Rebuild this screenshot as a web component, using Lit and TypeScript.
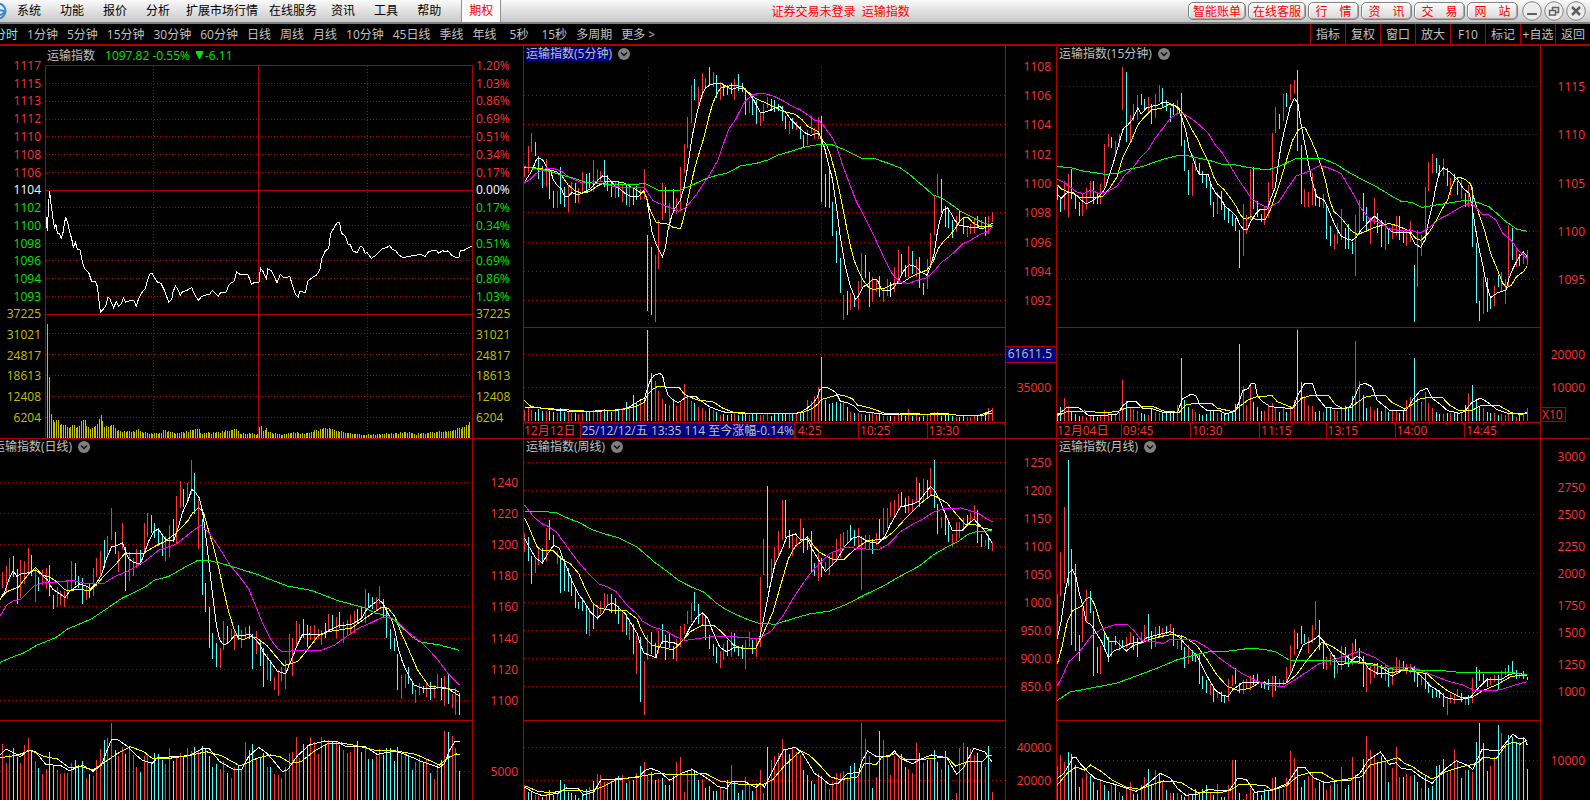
import { LitElement, html, svg, css, nothing } from "lit";
import { customElement, property } from "lit/decorators.js";
import { classMap } from "lit/directives/class-map.js";

/** Horizontal and vertical extent of a plot, in chart units. */
interface View { x: number; y: number; w: number; h: number; }
interface Tick { y: number; text: string; kind?: "mark" | "unit"; }
interface TimeCell { w: number; text: string; kind?: "mark" | "cut"; }
interface KlineData {
  name: string;
  active?: boolean;
  clipped?: boolean;
  view: View;
  from: number;
  to: number;
  split: number;
  base: number;
  rows: number[];
  cols?: number[];
  ticks: Tick[];
  times?: TimeCell[];
  bars: string;
  volumes: string;
  lines: { color: string; points: string }[];
}

const ticks = (text: string): Tick[] =>
  text.split(" ").map((t) => {
    const [label, y] = t.split("@");
    return { text: label, y: Number(y) };
  });

const MIN5: KlineData = {
  name: "运输指数(5分钟)",
  active: true,
  view: { x: 11.6, y: 18, w: 1397, h: 1128 },
  from: 13, to: 1372, split: 862, base: 1143,
  rows: [166, 253, 343, 430, 517, 607, 694, 781, 943, 1042],
  cols: [373, 875],
  ticks: [
    ...ticks("1108@79 1106@166 1104@253 1102@343 1100@430 1098@517 1096@607 1094@694 1092@781"),
    { text: "61611.5", y: 943, kind: "mark" },
    { text: "35000", y: 1042 },
  ],
  times: [
    { w: 169, text: "12月12日" },
    { w: 619, text: "25/12/12/五 13:35 114 至今涨幅-0.14%", kind: "mark" },
    { w: 180, text: "4:25", kind: "cut" },
    { w: 200, text: "10:25" },
    { w: 229, text: "13:30" },
  ],
  bars: "r378-412 r318-400 r279-336 c306-348 c348-417 c378-444 r357-441 c385-476 c452-504 r452-504 c380-492 c440-500 r435-516 r426-466 c428-489 r445-489 r396-462 c402-455 c398-445 r360-457 r387-428 r392-425 c360-441 c405-454 c423-471 r425-474 c425-471 r434-486 c434-495 r436-501 c440-495 c437-480 r448-480 r387-478 c585-812 c620-825 r645-846 r540-687 r430-540 c440-520 r490-566 c448-506 r474-522 r381-510 r312-400 r231-325 r135-249 c117-181 r141-200 r99-171 r114-142 c81-136 r96-141 c105-175 r127-180 c132-168 c135-165 c129-162 r117-180 c102-153 c129-156 c144-225 r183-219 c165-225 c180-252 r216-258 r192-243 r171-204 c177-212 c180-216 c192-213 c198-243 c228-267 r243-282 c234-267 r246-270 c258-297 c285-321 r270-315 r228-279 r264-297 r231-297 c228-486 c402-501 c385-503 c486-588 c573-669 c654-759 r765-840 c753-825 r759-810 c768-801 r723-810 r639-744 c645-714 c696-801 r711-786 r720-756 c708-771 r744-786 r717-768 w726-771 r681-756 r630-728 c642-702 c675-711 r618-711 c633-702 r657-711 c651-744 c729-765 r657-747 r579-684 r465-585 r402-465 c417-519 c498-561 c510-564 c540-594 r528-576 c513-549 c534-582 r558-591 r552-582 r534-579 c528-564 r540-567 c531-588 r528-582 r516-546",
  volumes: "1110 1105 1110 1117 1108 1113 1114 1113 1117 1119 1103 1115 1117 1119 1119 1122 1118 1117 1115 1110 1114 1113 1108 1112 1115 1113 1110 1105 1086 1100 1065 1085 1078 1070 870 998 1022 1053 1077 1092 1095 1077 1098 1087 1032 1070 1083 1089 1101 1105 1113 1105 1110 1116 1125 1122 1125 1122 1118 1125 1122 1120 1124 1122 1123 1124 1125 1122 1128 1122 1120 1122 1120 1122 1122 1120 1118 1115 1080 1083 1068 1041 951 1080 1091 1089 1086 1090 1083 1100 1116 1119 1120 1122 1125 1122 1120 1125 1122 1128 1128 1129 1127 1125 1122 1129 1107 1128 1125 1130 1128 1122 1125 1116 1116 1127 1126 1126 1128 1131 1130 1126 1131 1130 1128 1125 1125 1116 1104 1104",
  lines: [
    { color: "white", points: "13,428 20,415 30,400 40,378 48,358 56,354 66,360 76,378 88,390 97,420 108,436 120,446 130,471 140,470 150,458 170,464 185,456 205,446 225,422 240,408 252,409 265,425 278,440 290,447 305,460 320,468 345,468 360,452 368,475 375,520 383,575 395,612 414,650 422,625 430,570 440,530 450,505 465,482 477,440 487,380 500,290 515,215 530,160 540,143 553,134 570,129 585,130 600,140 615,148 630,143 650,146 665,160 680,182 698,219 715,215 735,207 755,198 765,212 775,222 790,242 810,262 830,280 845,286 857,282 866,280 872,290 885,325 897,375 908,420 919,500 930,590 945,680 960,740 975,778 985,765 995,742 1010,732 1025,718 1038,720 1050,750 1070,752 1085,744 1100,720 1115,692 1130,674 1150,680 1165,696 1182,706 1192,680 1203,640 1210,590 1218,545 1230,510 1242,504 1252,520 1262,540 1275,555 1295,560 1320,563 1345,565 1360,558 1372,549" },
    { color: "yellow", points: "13,383 45,384 75,388 88,390 105,395 120,405 140,435 160,452 180,460 200,455 225,438 250,425 280,424 305,430 330,445 350,458 361,456 368,475 378,510 395,546 410,550 425,551 445,562 466,566 475,535 485,490 497,430 510,375 520,340 535,290 550,225 560,190 570,165 582,145 600,139 625,136 645,140 665,158 685,176 710,187 735,200 760,213 800,223 820,240 835,258 852,268 866,275 875,296 890,315 900,340 915,395 925,440 935,490 950,570 960,620 970,660 982,690 995,718 1010,740 1025,748 1060,744 1085,732 1110,729 1130,714 1160,699 1182,690 1200,665 1215,625 1230,605 1245,590 1265,565 1275,545 1290,531 1303,534 1315,548 1335,560 1372,558" },
    { color: "magenta", points: "13,428 30,418 45,402 60,393 80,384 95,385 120,393 140,410 160,420 180,428 200,428 220,423 240,426 265,438 290,441 315,444 340,443 361,442 372,460 385,480 400,489 420,496 440,505 460,514 480,503 500,480 515,460 530,435 550,405 575,360 590,315 605,270 625,240 640,210 655,182 675,165 695,160 715,162 740,170 765,183 790,198 815,210 840,228 855,240 870,243 885,262 905,290 920,320 935,370 955,425 975,480 1000,530 1020,570 1040,615 1060,660 1080,700 1095,718 1110,728 1130,730 1150,722 1180,714 1200,696 1225,666 1245,652 1265,633 1285,612 1310,600 1335,584 1355,576 1372,561" },
    { color: "green", points: "13,380 45,386 88,394 120,405 160,416 190,427 240,432 300,432 345,432 365,431 378,438 400,450 430,450 465,450 490,440 515,428 545,414 575,405 600,400 640,378 690,369 720,360 750,345 790,333 830,320 870,313 905,314 940,328 990,354 1030,356 1070,370 1105,384 1130,402 1150,420 1175,442 1200,465 1225,474 1255,495 1280,514 1310,530 1340,546 1372,558" },
    { color: "white", points: "13,1101 60,1104 120,1112 180,1116 230,1112 280,1111 310,1105 330,1093 350,1080 362,1075 370,1045 380,1018 390,1006 405,1000 414,1006 420,1035 430,1065 445,1080 460,1088 475,1077 490,1068 510,1069 525,1082 550,1100 575,1110 600,1118 700,1121 800,1120 815,1117 835,1104 850,1090 862,1075 870,1050 880,1042 895,1044 910,1052 920,1062 930,1083 950,1088 970,1098 985,1113 1020,1118 1050,1122 1090,1124 1120,1120 1180,1123 1220,1119 1245,1122 1280,1127 1330,1128 1350,1120 1372,1112" },
    { color: "yellow", points: "13,1081 30,1098 45,1103 100,1107 200,1114 240,1113 300,1108 340,1098 360,1088 372,1062 385,1048 400,1039 430,1042 462,1042 475,1060 490,1070 520,1081 560,1085 590,1105 620,1117 700,1122 780,1121 820,1118 850,1105 865,1092 875,1078 895,1073 925,1064 945,1068 965,1076 980,1095 1020,1105 1060,1120 1100,1122 1250,1122 1270,1126 1345,1126 1355,1122 1372,1119" },
  ],
};

const MIN15: KlineData = {
  name: "运输指数(15分钟)",
  view: { x: 20.3, y: 18, w: 1403, h: 1128 },
  from: 21, to: 1386, split: 862, base: 1143,
  rows: [139, 283, 430, 574, 718, 943, 1042],
  ticks: [
    ...ticks("1115@139 1110@283 1105@430 1100@574 1095@718 20000@943 10000@1042"),
    { text: "X10", y: 1146, kind: "unit" },
  ],
  times: [
    { w: 190, text: "12月04日" },
    { w: 200, text: "09:45" },
    { w: 200, text: "10:30" },
    { w: 192, text: "11:15" },
    { w: 200, text: "13:15" },
    { w: 201, text: "14:00" },
    { w: 220, text: "14:45" },
  ],
  bars: "c441-480 c471-516 r423-510 r402-531 c387-477 c468-507 c486-528 r462-528 r444-507 r423-471 c423-492 c456-492 r432-492 r312-441 r282-321 c291-324 r303-345 r282-321 r81-210 c96-306 r225-306 r192-243 r165-240 c162-195 c177-210 r171-216 c192-252 r162-234 r135-186 c144-204 c180-213 c204-246 c189-225 r180-222 c159-318 c300-393 c390-465 r369-468 r357-393 c369-399 c393-429 c402-444 c432-495 c486-531 r456-522 c453-510 c495-540 c510-549 c522-558 c534-573 c570-684 r492-648 r525-582 r387-540 c381-507 c483-531 c522-546 r501-555 r426-534 r279-447 r201-279 c222-267 r162-243 c159-201 r132-180 r120-162 c90-333 c315-492 r447-501 r456-501 r399-495 c447-498 c471-501 r462-504 c495-597 c558-618 r582-627 r549-612 r507-600 c564-627 c552-627 c606-642 r525-708 r480-585 c459-543 c501-573 r531-612 r474-552 c519-579 c540-621 r540-630 c570-612 r555-597 r528-585 c528-600 c570-609 r573-618 r543-606 c675-846 r570-741 r585-648 r441-603 r366-453 r342-399 c354-399 c375-408 r357-408 c384-438 r414-465 c402-426 c423-465 r420-477 c459-501 r435-501 c441-621 c609-789 c783-843 r711-822 c714-816 c768-807 r738-798 c705-741 r696-756 r717-792 r555-738 c564-660 r627-681 c642-678 r636-672 r630-675",
  volumes: "1120 1102 1074 1098 1115 1122 1128 1128 1131 1128 1129 1131 1128 1110 1116 1122 1118 1117 1020 1083 1101 1108 1114 1119 1122 1125 1104 1115 1118 1117 1116 1119 1119 1095 954 1080 1101 1107 1116 1122 1125 1122 1110 1113 1118 1119 1122 1122 1116 1093 912 1038 1095 1029 1086 1100 1112 1113 1098 1090 1101 1116 1105 1116 1100 1080 870 1026 1068 1095 1098 1116 1113 1116 1101 1101 1110 1112 1104 1098 1105 1068 903 1023 1065 1104 1101 1110 1105 1113 1104 1117 1113 1110 1119 1113 1080 1071 954 1071 1086 1056 1089 1104 1116 1122 1122 1118 1120 1116 1118 1119 1095 1059 1035 1083 1098 1105 1116 1119 1118 1125 1122 1125 1122 1122 1131 1125 1119 1104",
  lines: [
    { color: "white", points: "21,462 33,475 45,462 55,456 68,458 85,475 105,492 120,484 140,470 152,458 162,440 172,405 182,375 192,340 203,300 213,265 225,256 240,238 255,204 265,222 280,204 300,198 315,195 328,186 345,189 365,198 375,210 385,240 395,275 405,330 415,352 425,385 435,405 460,404 468,435 480,458 495,474 508,498 525,513 540,528 552,555 562,568 573,568 583,545 597,522 610,508 632,507 642,475 655,440 662,380 672,310 685,255 697,203 710,175 720,190 727,240 738,300 750,365 760,420 775,470 795,480 805,498 817,530 828,555 845,588 860,596 878,601 890,591 905,568 920,552 942,528 965,548 980,565 995,576 1045,579 1060,612 1077,622 1090,598 1100,540 1110,500 1120,445 1130,400 1143,384 1160,395 1185,420 1200,445 1218,460 1226,500 1235,560 1245,620 1258,680 1268,735 1280,773 1300,758 1325,750 1333,715 1345,685 1360,655 1375,636 1386,650" },
    { color: "yellow", points: "21,435 35,448 65,460 85,471 105,474 130,472 152,470 170,450 195,410 212,350 235,305 255,255 270,236 295,210 325,204 345,193 370,200 390,225 410,265 430,300 445,335 460,365 475,410 487,432 505,448 525,475 540,498 550,520 562,535 572,538 583,529 598,538 625,538 640,510 655,465 670,420 690,350 705,300 720,272 733,261 742,265 758,300 775,340 790,385 802,430 812,480 825,515 845,533 860,552 875,572 893,584 915,575 940,563 985,550 1010,558 1045,573 1062,595 1077,601 1095,585 1110,563 1125,535 1140,505 1155,480 1165,445 1175,420 1188,411 1205,418 1222,432 1230,470 1245,520 1262,570 1280,640 1300,690 1315,730 1327,743 1340,736 1355,710 1375,695 1386,678" },
    { color: "magenta", points: "21,418 45,430 60,442 80,458 100,460 120,450 140,460 165,456 195,438 215,408 240,385 260,355 285,330 305,295 330,262 350,235 370,220 385,220 410,235 435,256 460,280 480,315 500,338 525,380 545,415 565,445 585,475 605,490 635,504 665,485 690,445 715,408 750,395 785,376 815,386 845,400 862,430 880,460 900,500 915,520 930,540 960,549 985,566 1010,571 1045,570 1065,577 1080,576 1105,560 1130,538 1160,522 1195,500 1222,488 1240,505 1255,522 1275,525 1295,540 1315,580 1340,602 1360,630 1386,656" },
    { color: "green", points: "21,379 65,384 95,393 130,398 160,403 195,400 220,390 270,379 330,357 370,347 400,347 430,354 460,360 500,373 540,375 580,383 630,390 665,380 695,365 715,356 790,355 830,372 860,392 900,415 945,438 1000,473 1020,484 1050,487 1080,502 1110,497 1160,489 1205,481 1235,485 1275,500 1300,522 1325,545 1355,567 1386,574" },
    { color: "white", points: "21,1125 50,1102 85,1104 110,1125 150,1127 195,1122 213,1095 228,1084 250,1085 270,1106 300,1107 330,1118 370,1117 385,1077 410,1062 425,1068 435,1095 455,1110 490,1110 510,1122 540,1112 560,1052 575,1046 585,1030 595,1030 602,1065 615,1083 640,1100 705,1106 720,1065 740,1030 762,1030 775,1070 800,1102 850,1107 872,1100 885,1070 900,1035 915,1030 935,1040 950,1080 985,1110 1035,1110 1055,1077 1075,1053 1095,1045 1110,1075 1130,1090 1155,1112 1190,1120 1205,1113 1225,1088 1250,1074 1270,1086 1300,1110 1335,1121 1370,1122 1386,1119" },
    { color: "yellow", points: "21,1128 50,1114 100,1113 150,1118 195,1115 225,1102 300,1100 330,1113 375,1117 395,1095 420,1090 470,1090 485,1104 530,1115 550,1100 575,1080 600,1070 645,1067 660,1085 685,1095 705,1104 730,1075 760,1066 810,1068 830,1095 850,1105 875,1103 895,1085 915,1072 940,1066 975,1066 990,1085 1030,1107 1050,1095 1070,1078 1095,1073 1140,1073 1160,1095 1185,1110 1225,1112 1250,1097 1305,1097 1340,1118 1370,1124 1386,1117" },
  ],
};

const DAILY: KlineData = {
  name: "运输指数(日线)",
  clipped: true,
  view: { x: 0, y: 12, w: 1396, h: 1083 },
  from: 8, to: 1359, split: 857, base: 1095,
  rows: [142, 235, 328, 421, 514, 610, 703, 796, 1009],
  ticks: ticks("1240@142 1220@235 1200@328 1180@421 1160@514 1140@610 1120@703 1100@796 5000@1009"),
  bars: "r411-459 r393-470 r369-440 c363-425 c402-507 r375-488 r378-447 r339-411 c360-423 r402-501 c426-468 r405-450 r399-462 c390-483 c480-522 r456-516 r468-510 r468-516 r438-492 r378-466 c384-450 c423-459 c429-507 r453-495 c447-489 r399-483 r369-426 r348-425 c315-400 r303-370 r219-315 c291-357 r348-411 r264-342 c336-468 r351-438 r369-423 r342-399 c345-390 r264-355 r234-306 c240-295 c264-309 c282-333 c300-363 r303-378 r270-366 c252-315 r183-325 r138-219 c162-216 r144-198 r75-177 c114-236 r192-342 c252-480 c444-531 c516-639 c594-672 c624-696 r639-699 r558-645 c573-624 r582-615 r582-645 c570-615 r585-639 r576-612 c573-612 c597-702 r588-657 c618-693 c639-756 r657-735 c675-738 r726-765 r705-783 r696-738 r675-762 r597-690 r609-723 r558-633 r567-620 c552-609 c570-636 r573-615 r570-624 r582-612 r585-630 c564-609 r537-585 c540-585 r546-609 c531-579 r561-624 r555-603 r540-600 r528-594 c522-567 c516-549 r462-564 c474-516 c486-522 r486-525 r453-507 c492-546 c516-609 c582-642 c609-648 c657-765 r720-792 r717-759 c696-747 c741-777 r765-804 r744-780 c753-774 r741-786 c741-795 r750-789 r717-762 c729-795 r723-813 c717-807 r777-819 r759-840 c774-840",
  volumes: "927 984 957 939 965 983 930 909 945 978 999 1018 1002 951 991 1005 1018 1014 1014 984 975 990 978 1029 1017 1023 975 942 915 909 865 945 963 935 957 933 960 996 1011 963 960 982 954 957 975 988 939 978 966 954 963 939 948 936 947 933 940 963 996 987 1002 978 1014 1029 996 990 1002 921 945 927 972 969 954 996 996 1018 1020 1029 996 954 951 906 970 927 930 906 921 957 906 930 915 921 918 930 945 954 951 936 918 951 936 972 972 963 942 960 939 939 978 936 954 954 963 1005 981 969 981 975 1014 1032 990 975 888 891 903 939 1009",
  lines: [
    { color: "white", points: "0,495 15,468 27,432 39,408 50,424 62,417 90,412 105,397 125,420 140,435 155,462 175,475 192,488 205,470 235,447 255,453 268,462 285,445 300,420 315,370 330,336 350,330 362,324 380,370 395,382 415,387 425,360 440,318 455,290 468,282 480,300 492,315 513,318 525,285 540,232 555,200 567,163 578,172 590,190 600,235 610,315 620,400 630,490 640,570 650,615 662,630 675,624 695,600 720,602 740,597 755,612 768,628 780,654 800,680 820,708 845,717 855,690 868,660 880,628 895,598 915,597 940,600 960,594 975,585 1000,573 1040,568 1070,550 1085,522 1100,510 1120,494 1132,504 1145,530 1160,560 1170,595 1178,640 1190,680 1205,715 1225,750 1255,762 1300,758 1325,762 1345,774 1359,783" },
    { color: "yellow", points: "0,492 20,470 55,456 90,410 105,405 125,420 150,428 170,442 190,463 205,468 230,462 265,468 285,450 310,420 345,385 370,354 425,354 460,333 490,318 520,295 555,258 568,236 587,217 602,232 615,280 630,330 645,390 660,460 675,525 692,582 705,610 720,614 740,605 760,609 790,632 815,663 840,692 880,680 905,650 940,603 970,590 1040,579 1080,550 1130,516 1150,522 1168,545 1185,590 1205,635 1235,705 1270,755 1310,757 1345,765 1359,772" },
    { color: "magenta", points: "0,543 20,510 40,497 60,494 100,453 125,444 170,441 215,436 260,447 310,444 340,424 380,408 430,378 470,345 520,328 570,288 595,270 615,290 640,325 680,390 705,420 735,460 755,510 775,560 800,612 820,640 835,650 900,645 950,646 990,630 1020,608 1060,580 1100,562 1130,547 1150,548 1175,560 1205,590 1250,625 1290,668 1325,715 1359,750" },
    { color: "green", points: "0,682 40,665 70,654 110,630 165,608 200,582 270,552 310,525 360,490 430,456 455,436 500,424 550,395 585,376 615,376 650,384 700,399 760,418 850,453 920,466 1000,497 1080,519 1110,534 1150,543 1180,568 1215,603 1240,620 1300,630 1359,646" },
    { color: "white", points: "0,960 18,942 40,953 60,965 85,945 105,950 135,988 180,992 205,1007 245,991 275,1009 300,990 315,950 330,914 350,915 375,933 400,958 420,975 450,985 465,969 500,966 560,962 600,940 620,942 650,980 690,1003 715,1003 735,965 765,937 790,955 815,985 835,1010 850,1005 880,962 915,930 960,918 1000,921 1025,936 1080,935 1115,958 1170,948 1210,963 1250,981 1300,998 1315,985 1330,945 1345,920 1359,921" },
    { color: "yellow", points: "0,968 50,961 90,946 130,964 170,972 205,999 240,994 275,1005 305,985 345,957 385,935 425,950 450,970 500,970 560,962 610,950 655,962 710,993 760,970 800,960 830,966 860,985 890,980 930,948 970,925 1010,924 1060,933 1110,946 1170,948 1230,958 1300,990 1325,968 1350,957 1359,960" },
  ],
};

const WEEKLY: KlineData = {
  name: "运输指数(周线)",
  view: { x: 11.6, y: 12, w: 1397, h: 1083 },
  from: 13, to: 1372, split: 857, base: 1095,
  rows: [82, 166, 250, 334, 418, 502, 586, 670, 754, 937, 1036],
  ticks: ticks("1250@82 1200@166 1150@250 1100@334 1050@418 1000@502 950.0@586 900.0@670 850.0@754 40000@937 20000@1036"),
  bars: "r294-351 c306-378 c363-447 r369-414 r342-390 c339-384 r279-378 c255-315 c300-335 r348-387 c363-474 c372-468 c399-471 c432-483 c456-519 c500-522 c489-528 c510-597 r519-603 c504-582 r510-555 r498-537 r474-520 r477-513 c477-534 c489-537 c513-567 r534-591 c537-600 r552-615 c567-657 r603-717 c606-801 r678-840 r600-675 c591-657 c624-669 r588-654 c567-627 c600-675 c597-639 c633-672 r612-678 r573-636 r567-597 r528-567 r504-561 c471-528 c507-567 r534-570 c546-615 c600-642 c627-663 c636-684 r648-699 r627-675 c615-663 r591-666 c594-651 c633-663 c630-672 r615-702 r591-635 c615-657 r612-666 r426-636 r312-420 c153-459 r372-441 r336-396 r288-363 r195-315 c195-309 c285-339 r303-363 r306-336 r252-312 c279-354 c306-345 c288-411 c384-423 r354-438 c369-426 r381-405 r363-420 r351-393 r312-381 r297-369 r291-336 r285-327 c270-312 c285-333 r279-342 r303-465 r300-342 r300-345 c312-357 r294-330 c252-315 r219-300 r219-279 r201-246 r195-249 r177-228 c171-212 c189-234 r183-234 r192-228 r126-204 c144-216 r132-195 c135-189 r99-180 c75-219 c207-297 r246-279 c240-300 c255-321 r297-336 r261-318 r261-309 r249-288 c240-273 r234-264 r210-255 c225-324 c297-336 r315-333 c300-342 r321-348",
  volumes: "1050 1070 1071 1080 1083 1086 1078 1065 1080 1075 1035 1047 1072 1074 1080 1090 1078 1062 1056 1038 1017 1020 1040 1041 1038 1029 1023 1020 1044 1038 1035 1014 993 981 1020 1011 1035 1032 1029 1050 1050 1023 981 966 1071 1005 999 1006 1035 1032 1059 1053 1068 1068 1056 1065 1035 990 1041 1074 1065 1026 1047 1068 1044 1005 1074 936 975 963 954 912 945 957 939 951 960 1005 1020 1038 1047 1014 1023 1041 1062 1041 1014 1014 1008 1026 993 984 1010 865 912 963 1059 1026 888 915 966 1020 963 969 957 996 1002 1014 924 954 984 975 975 945 981 1002 948 990 1092 1074 940 924 936 942 960 954 978 996 933 1071",
  lines: [
    { color: "white", points: "13,310 25,333 45,368 65,384 80,357 97,331 115,340 125,372 140,408 155,447 170,478 185,498 205,532 225,549 240,535 255,510 270,504 285,516 305,536 325,570 341,597 350,630 360,654 395,668 402,640 414,620 445,622 460,630 478,610 495,575 515,545 530,534 545,549 560,590 580,636 600,650 625,636 650,640 685,640 695,615 710,540 725,460 740,390 760,345 775,306 800,297 815,315 835,312 850,345 865,370 887,410 900,397 920,375 945,332 965,310 985,304 1010,320 1040,325 1060,304 1075,270 1105,216 1140,207 1160,198 1172,180 1192,155 1205,168 1220,198 1235,235 1255,285 1285,285 1300,270 1318,252 1330,265 1350,288 1372,325" },
    { color: "yellow", points: "13,250 25,273 35,300 50,336 65,348 95,346 120,372 145,385 170,415 185,450 210,503 230,519 265,526 310,528 340,552 350,580 365,610 385,632 410,636 445,645 465,625 495,590 530,570 565,573 585,590 620,630 650,642 685,640 700,610 735,530 760,440 780,370 800,333 835,306 855,335 870,352 905,372 940,374 970,345 1010,316 1055,314 1085,290 1120,250 1165,204 1195,180 1210,186 1240,204 1265,235 1295,270 1320,268 1345,279 1372,285" },
    { color: "magenta", points: "13,210 40,246 65,267 80,273 105,290 135,333 165,375 200,417 230,447 255,456 280,471 310,510 340,537 355,558 385,576 420,586 450,604 480,616 530,609 570,603 650,607 690,612 730,588 765,540 790,495 835,426 865,390 900,355 945,337 1005,342 1045,342 1070,328 1105,290 1140,268 1170,252 1200,232 1230,221 1280,219 1330,234 1350,248 1372,261" },
    { color: "green", points: "13,228 65,229 105,233 140,250 170,262 210,284 250,298 285,308 340,336 390,381 430,411 460,436 500,457 535,472 570,504 600,525 650,549 690,564 740,568 790,552 840,537 900,528 950,507 1000,480 1050,456 1100,426 1160,393 1200,360 1240,336 1275,318 1300,298 1325,290 1372,287" },
    { color: "white", points: "13,1056 40,1073 65,1082 110,1075 135,1059 170,1062 185,1080 215,1070 235,1035 280,1032 345,1026 365,1005 380,1000 405,1010 435,1036 450,1026 470,1014 500,1004 525,1018 555,1038 575,1055 600,1060 615,1040 650,1038 685,1058 698,1045 710,1056 725,1025 745,985 765,945 800,937 820,955 835,980 855,1015 875,1028 900,1050 925,1044 950,1017 985,1011 992,980 1010,948 1035,965 1070,966 1088,948 1105,970 1140,986 1165,972 1195,960 1240,968 1268,1018 1290,995 1318,940 1350,951 1372,982" },
    { color: "yellow", points: "13,1052 50,1068 90,1074 130,1065 200,1069 240,1055 280,1035 360,1022 400,1015 450,1020 540,1016 580,1038 640,1048 710,1047 735,1033 770,990 815,948 840,960 870,990 900,1025 930,1034 980,1026 1000,985 1035,988 1050,967 1090,956 1120,974 1180,972 1240,966 1265,993 1300,980 1345,978 1358,963 1372,961" },
  ],
};

const MONTHLY: KlineData = {
  name: "运输指数(月线)",
  view: { x: 20.3, y: 12, w: 1403, h: 1083 },
  from: 21, to: 1386, split: 857, base: 1095,
  rows: [238, 415, 592, 769, 976],
  ticks: ticks("3000@62 2750@155 2500@238 2250@332 2000@415 1750@509 1500@592 1250@686 1000@769 10000@976"),
  bars: "r477-612 r351-483 r216-444 c75-453 c342-630 c387-648 c600-678 r520-621 r465-565 c468-534 c528-723 c635-714 r633-717 c588-642 c606-681 r621-666 c603-630 r615-648 c615-639 r606-639 r591-624 c603-645 c609-666 r591-627 r570-618 c537-618 c588-642 r576-636 c573-609 r579-609 c573-597 r567-600 c579-633 r618-642 c600-645 c636-699 r630-687 c645-678 c654-681 c660-747 c723-762 c735-774 r747-780 c756-801 r768-789 c771-801 c783-804 r732-798 r720-753 c699-747 c744-774 r735-777 r732-762 r723-765 c720-750 c717-744 c741-759 c738-762 c732-765 r723-786 c723-768 r732-756 r735-750 r696-744 r630-714 r582-660 c594-642 c573-627 c597-624 r606-654 r570-624 r498-585 c555-645 c618-702 r666-705 r654-690 c660-729 r690-714 r633-705 c636-684 c660-696 r624-690 c612-648 c639-684 c663-756 r684-771 r693-747 r684-729 c684-720 c690-729 r690-738 c702-756 r702-750 r666-714 r675-711 c678-708 r687-717 r687-714 c693-741 c711-756 r720-750 c717-762 c741-774 c762-789 c762-786 c765-789 c774-816 r789-840 r777-804 r780-807 r762-786 c774-801 r789-810 c780-810 r729-804 c696-759 c705-738 c717-741 c729-756 r726-750 r720-741 c720-762 r708-738 r699-720 c690-714 c678-714 c705-732 r714-729 c708-732 c726-735",
  volumes: "993 960 981 951 957 990 1056 1029 1014 1023 1041 1065 1033 1050 1068 1050 1050 1071 1083 1062 1041 1077 1077 1050 1026 1002 1047 1005 1020 1041 1065 1074 1075 1074 1080 1085 1074 1080 1062 1077 1062 1050 1071 1080 1047 1086 1086 1050 975 976 1074 1092 1077 1060 1074 1068 1080 1062 1065 1029 1026 1059 1062 1029 948 969 1002 1056 1035 1023 1014 1059 1041 1041 1065 1050 1035 1047 996 1062 1050 966 1020 1038 972 903 945 966 981 963 981 1041 999 936 1026 1026 1017 1023 1020 1041 1059 1023 1059 1053 993 990 972 1014 1005 942 981 1029 1005 1005 1011 921 865 924 1008 993 966 870 894 930 900 906 921 921 906 1002",
  lines: [
    { color: "white", points: "21,612 33,555 45,465 55,415 65,404 75,425 85,475 95,510 105,560 120,570 135,595 150,620 170,668 185,648 205,640 235,625 265,622 280,609 310,600 350,590 375,606 395,630 425,660 440,690 460,730 480,765 500,780 517,785 530,765 560,742 610,743 650,747 685,744 700,715 715,675 735,630 760,618 780,603 795,618 815,650 840,690 870,684 890,664 905,670 925,700 950,715 975,714 995,723 1020,708 1045,696 1065,712 1085,730 1105,753 1125,765 1150,788 1185,795 1220,788 1245,758 1270,733 1310,734 1335,718 1360,714 1386,721" },
    { color: "yellow", points: "21,688 35,635 50,560 65,528 90,515 105,492 118,486 130,510 145,560 170,618 192,619 222,648 240,633 280,618 315,606 355,598 390,606 425,630 455,672 485,720 515,754 545,766 580,760 610,742 650,747 685,745 715,720 745,678 790,621 820,635 850,655 880,678 910,683 945,688 990,714 1025,705 1095,716 1120,740 1155,768 1195,788 1225,788 1255,768 1300,748 1340,724 1386,720" },
    { color: "magenta", points: "21,753 40,715 55,680 85,651 120,603 150,582 190,569 225,568 245,588 265,615 330,625 350,613 400,613 425,618 460,640 485,663 520,690 560,717 600,738 640,752 680,754 710,735 750,708 780,687 830,672 880,655 900,649 945,668 985,696 1050,697 1085,709 1110,720 1160,740 1200,750 1230,765 1270,768 1310,764 1345,752 1386,740" },
    { color: "green", points: "21,796 60,770 95,764 145,754 195,744 250,723 310,700 370,674 420,660 460,651 520,648 580,640 620,643 655,650 695,675 820,678 895,684 945,692 1000,703 1060,706 1150,708 1190,712 1300,712 1350,714 1386,720" },
    { color: "white", points: "21,1031 40,1015 55,990 65,969 75,967 90,988 110,1010 130,1030 160,1040 195,1050 250,1069 280,1050 320,1015 350,1030 370,1060 395,1081 430,1077 460,1064 520,1068 545,1030 570,1033 595,1072 645,1065 690,1045 720,998 740,997 765,1028 800,1043 840,1037 870,1038 900,1015 925,975 960,951 985,988 1005,983 1020,1000 1050,1004 1080,1028 1110,1045 1150,1000 1180,977 1210,990 1228,1003 1255,943 1305,948 1345,897 1360,910 1380,912 1386,930" },
    { color: "yellow", points: "21,1050 50,1015 75,996 100,1005 118,990 150,1010 180,1035 220,1056 260,1063 300,1048 330,1038 380,1042 430,1074 500,1072 525,1065 550,1048 625,1051 645,1066 690,1050 720,1023 750,1014 790,1013 830,1038 905,1025 930,990 985,976 1010,968 1030,985 1055,996 1080,1015 1110,1032 1150,1010 1190,997 1240,985 1260,966 1295,972 1325,930 1345,921 1365,928 1386,916" },
  ],
};

const INTRADAY = {
  price: "135,522 140,573 144,485 147,454 150,487 154,515 157,540 161,564 165,553 170,580 176,582 181,596 187,575 191,545 195,533 200,548 206,575 212,597 217,622 223,608 229,627 236,627 243,663 250,686 262,697 271,724 283,725 288,740 292,775 297,817 305,808 313,797 319,772 325,775 330,790 336,803 344,785 351,799 360,790 365,773 371,787 383,782 397,783 403,799 410,775 420,757 430,745 436,722 443,702 450,700 456,712 466,727 476,730 486,750 499,787 508,778 512,755 519,738 526,748 533,766 540,755 553,751 567,743 576,765 587,780 596,770 610,765 620,763 628,751 645,769 653,757 668,757 678,733 692,724 700,696 712,705 733,704 744,732 754,727 766,728 770,684 778,695 788,717 792,687 803,693 812,710 819,729 829,704 840,713 857,710 865,735 874,763 882,771 887,754 903,758 911,723 925,712 936,705 946,690 952,655 962,633 972,625 978,580 990,560 997,548 1004,547 1010,580 1020,586 1030,613 1035,612 1044,633 1056,638 1066,619 1073,622 1080,640 1086,638 1098,655 1110,647 1120,638 1130,626 1145,622 1152,616 1160,627 1170,632 1180,645 1193,653 1205,650 1245,643 1257,650 1268,634 1290,630 1297,639 1310,632 1318,636 1325,632 1335,645 1350,653 1357,653 1362,630 1374,630 1382,625 1395,619",
  volume: "141,852 147,1032 150,1116 155,1138 165,1150 170,1131 176,1152 190,1155 208,1165 217,1152 225,1163 236,1158 241,1143 245,1145 250,1131 255,1155 270,1168 285,1155 291,1150 297,1122 303,1137 309,1160 325,1160 336,1152 345,1172 380,1174 403,1175 410,1167 420,1176 450,1180 480,1179 487,1167 495,1174 520,1180 550,1176 587,1164 595,1180 640,1178 702,1167 710,1182 750,1180 766,1184 770,1140 776,1174 788,1164 795,1176 830,1184 870,1176 900,1182 951,1167 975,1164 990,1170 1020,1178 1080,1185 1130,1182 1170,1180 1200,1176 1230,1182 1290,1176 1330,1174 1360,1165 1385,1155 1394,1133",
  prices: ["1117", "1115", "1113", "1112", "1110", "1108", "1106", "1104", "1102", "1100", "1098", "1096", "1094", "1093"],
  rates: ["1.20%", "1.03%", "0.86%", "0.69%", "0.51%", "0.34%", "0.17%", "0.00%", "0.17%", "0.34%", "0.51%", "0.69%", "0.86%", "1.03%"],
  lots: ["37225", "31021", "24817", "18613", "12408", "6204"],
};

const line = (cls: string, x1: number, y1: number, x2: number, y2: number) =>
  svg`<line class=${cls} x1=${x1} y1=${y1} x2=${x2} y2=${y2}></line>`;

/** Rules shared by every plot. */
const plotStyles = css`
  svg.plot {
    display: block;
    width: 100%;
    height: 100%;
    min-height: 0;
    shape-rendering: crispEdges;
    fill: none;
    stroke-width: 1px;
  }
  svg.plot * { vector-effect: non-scaling-stroke; }
  .solid { stroke: #b00000; }
  .dotted { stroke: #b00000; stroke-dasharray: 1 3; }
  .dense { stroke: #b00000; stroke-dasharray: 1 2; }
  .r { stroke: #ff3232; }
  .c { stroke: #54fcfc; }
  .w, .white { stroke: #fff; }
  .yellow { stroke: #ff0; }
  .magenta { stroke: #f0f; }
  .green { stroke: #0f0; }
  .olive { stroke: #c0c000; }
`;

@customElement("kline-pane")
class KlinePane extends LitElement {
  @property({ attribute: false }) data!: KlineData;

  static styles = [
    plotStyles,
    css`
      :host {
        display: grid;
        grid-template-columns: minmax(0, 1fr) var(--axis-width, 51px);
        grid-template-rows: minmax(0, 1fr) auto;
        min-width: 0;
        min-height: 0;
        overflow: hidden;
        color: #ff3232;
      }
      .stage { display: grid; min-height: 0; min-width: 0; }
      .stage > * { grid-area: 1 / 1; }
      .head {
        display: flex;
        align-items: center;
        align-self: start;
        gap: 6px;
        padding: 1px 2px;
      }
      .clipped { margin-left: -9px; }
      h2 {
        margin: 0;
        font: inherit;
        line-height: 14px;
        color: #c0c0c0;
        white-space: nowrap;
      }
      .active { background: #000080; }
      button { padding: 0; border: 0; background: none; line-height: 0; cursor: pointer; }
      .axis {
        grid-row: 1 / 3;
        grid-column: 2;
        display: flex;
        flex-direction: column;
        border-left: 1px solid #b00000;
        text-align: right;
      }
      .timed { padding-bottom: 16px; }
      .gap { flex: 1 1 0; min-height: 0; }
      .tick { height: 0; line-height: 2px; padding-right: 5px; }
      .mark {
        height: 15px;
        line-height: 14px;
        margin: -8px 0 -9px;
        padding-right: 4px;
        border: solid #b00000;
        border-width: 1px 0;
        background: #000080;
        color: #c0c0c0;
      }
      .unit {
        align-self: flex-start;
        height: 13px;
        line-height: 13px;
        margin-top: -15px;
        padding: 0 2px 0 1px;
        border: solid #b00000;
        border-width: 1px 1px 1px 0;
      }
      .times {
        display: flex;
        height: 15px;
        border-top: 1px solid #b00000;
        line-height: 15px;
        white-space: nowrap;
      }
      .cell {
        flex: 1 1 0;
        min-width: 0;
        box-sizing: border-box;
        padding-left: 1px;
        border-left: 1px solid #b00000;
        background: repeating-linear-gradient(to right, transparent 0 calc(25% - 1px), #b00000 calc(25% - 1px) 25%) 0 0 / 100% 2px no-repeat;
      }
      .cell:first-child { padding-left: 0; border-left: 0; background: none; }
      .now { flex: none; padding-left: 0; background: #000080; color: #c0c0c0; }
      .cut { padding-left: 3px; }
    `,
  ];

  render() {
    const d = this.data;
    const bars = d.bars.split(" ");
    const volumes = d.volumes.split(" ").map(Number);
    const at = (i: number, n: number) => d.from + ((d.to - d.from) * i) / (n - 1);
    const v = d.view;
    let last = v.y;
    return html`
      <div class="stage">
        <svg class="plot" viewBox="${v.x} ${v.y} ${v.w} ${v.h}" preserveAspectRatio="none" aria-hidden="true">
          ${d.rows.map((y) => line("dotted", v.x, y, v.x + v.w, y))}
          ${(d.cols ?? []).map((x) => line("dotted", x, 81, x, d.base))}
          ${line("solid", v.x, d.split, v.x + v.w, d.split)}
          ${bars.map((b, i) => {
            const [hi, lo] = b.slice(1).split("-").map(Number);
            const x = at(i, bars.length);
            return line(b[0], x, hi, x, lo);
          })}
          ${volumes.map((top, i) => {
            const x = at(i, volumes.length);
            return line((bars[i] ?? "r")[0], x, top, x, d.base);
          })}
          ${d.lines.map((l) => svg`<polyline class=${l.color} points=${l.points}></polyline>`)}
        </svg>
        <div class=${classMap({ head: true, clipped: !!d.clipped })}>
          <h2 class=${classMap({ active: !!d.active })}>${d.name}</h2>
          <button aria-label="切换指标">
            <svg width="12" height="12" viewBox="0 0 12 12">
              <circle cx="6" cy="6" r="6" fill="#808080"></circle>
              <path d="M3 4.5 6 7.5 9 4.5" fill="none" stroke="#111" stroke-width="1.4"></path>
            </svg>
          </button>
        </div>
      </div>
      <div class=${classMap({ axis: true, timed: !!d.times })}>
        ${d.ticks.map((t) => {
          const grow = t.y - last;
          last = t.y;
          return html`<span class="gap" style="flex-grow:${grow}"></span>
            <span class=${t.kind ?? "tick"}>${t.text}</span>`;
        })}
        <span class="gap" style="flex-grow:${Math.max(v.y + v.h - last, 0)}"></span>
      </div>
      ${d.times
        ? html`<div class="times">
            ${d.times.map((t) =>
              t.kind === "mark"
                ? html`<span class="cell now">${t.text}</span>`
                : html`<span
                    class=${classMap({ cell: true, cut: t.kind === "cut" })}
                    style="flex-grow:${t.w}"
                  >${t.text}</span>`,
            )}
          </div>`
        : nothing}
    `;
  }
}

@customElement("intraday-pane")
class IntradayPane extends LitElement {
  static styles = [
    plotStyles,
    css`
      :host {
        display: grid;
        grid-template-columns: 45px minmax(0, 1fr) 50px;
        grid-template-rows: 19px minmax(0, 1fr);
        min-width: 0;
        min-height: 0;
      }
      .head {
        grid-column: 2 / 4;
        display: flex;
        align-items: center;
        padding-left: 2px;
        line-height: 18px;
        color: #00e600;
        white-space: pre;
      }
      h2 { margin: 0 10px 0 0; font: inherit; color: #c0c0c0; }
      .drop { margin: 0 1px 0 5px; }
      .frame {
        min-height: 0;
        border: solid #b00000;
        border-width: 1px 1px 0;
      }
      /* Each label row is centred on the grid line above it. */
      .scale {
        display: grid;
        grid-template-rows: 249fr 124fr;
        min-height: 0;
        margin: -8px 0 8px;
      }
      .left { padding-right: 4px; text-align: right; }
      .right { padding-left: 3px; }
      .part { display: flex; flex-direction: column; min-height: 0; }
      .lots { margin: -2px 0 2px; }
      .label {
        display: grid;
        align-items: center;
        flex: 1 1 0;
        min-height: 0;
        line-height: 14px;
      }
      .up { color: #ff3232; }
      .flat { color: #fff; }
      .down { color: #00e600; }
      .lot { color: #c0c000; }
    `,
  ];

  private scale(side: string, values: string[]) {
    const tone = (i: number) => (i < 7 ? "up" : i === 7 ? "flat" : "down");
    return html`<div class="scale ${side}">
      <div class="part">${values.map((v, i) => html`<span class="label ${tone(i)}">${v}</span>`)}</div>
      <div class="part lots">${INTRADAY.lots.map((v) => html`<span class="label lot">${v}</span>`)}</div>
    </div>`;
  }

  render() {
    const marks = INTRADAY.volume.split(" ").map((p) => p.split(",").map(Number));
    const bars = [];
    for (let x = 141, i = 0; x < 1395; x += 5.27, i++) {
      const k = Math.max(1, marks.findIndex((m) => m[0] >= x));
      const [x0, y0] = marks[k - 1];
      const [x1, y1] = marks[k];
      const y = y0 + ((y1 - y0) * (x - x0)) / (x1 - x0);
      bars.push(line("olive", x, x > 160 ? y + ((i * 7) % 5) - 2 : y, x, 1194));
    }
    return html`
      <div class="head"><h2>运输指数</h2><span>1097.82 -0.55%</span><svg class="drop" width="9" height="9" viewBox="0 0 9 9" aria-hidden="true"><path d="M1 0H8V2L5 8H4L1 2z" fill="#00e600"></path></svg><span>-6.11</span></div>
      ${this.scale("left", INTRADAY.prices)}
      <div class="frame">
        <svg class="plot" viewBox="136 78 1260 1116" preserveAspectRatio="none" aria-hidden="true">
          ${[130, 184, 238, 290, 344, 397, 502, 556, 610, 661, 715, 769, 880, 943, 1006, 1069, 1132].map((y) => line("dense", 136, y, 1396, y))}
          ${[454, 1087].map((x) => line("dense", x, 78, x, 1194))}
          ${[451, 823].map((y) => line("solid", 136, y, 1396, y))}
          ${line("solid", 765, 78, 765, 1194)}
          ${bars}
          <polyline class="white" points=${INTRADAY.price}></polyline>
        </svg>
      </div>
      ${this.scale("right", INTRADAY.rates)}
    `;
  }
}

@customElement("app-root")
class AppRoot extends LitElement {
  static styles = css`
    :host {
      display: grid;
      grid-template-rows: auto auto minmax(0, 1fr);
      height: 100vh;
      overflow: hidden;
      background: #000;
      font: 12px "Open Sans", "Noto Sans CJK SC", sans-serif;
    }
    button {
      margin: 0;
      padding: 0;
      border: 0;
      background: none;
      color: inherit;
      font: inherit;
      white-space: nowrap;
      cursor: pointer;
    }
    .menubar {
      display: flex;
      align-items: center;
      height: 22px;
      border-bottom: 2px solid #808080;
      background: linear-gradient(#fafafa, #c8c8c8);
      color: #000;
    }
    .logo { width: 8px; height: 18px; }
    .menu { padding: 0 10px 0 9px; line-height: 22px; }
    .wide { padding: 0 5px 0 6px; }
    .tab {
      margin-left: 10px;
      padding: 0 7px;
      border: solid #909090;
      border-width: 0 1px;
      background: #fafafa;
      color: #f00;
      line-height: 22px;
    }
    .status { flex: 1; padding-right: 8px; text-align: center; color: #f00; }
    .tools { display: flex; gap: 2px; }
    .tool {
      box-sizing: border-box;
      height: 18px;
      min-width: 51px;
      padding: 0 4px;
      border: 1px solid #808080;
      border-radius: 5px;
      background: linear-gradient(#fafafa, #d8d8d8);
      box-shadow: inset -1px -1px 0 #a8a8a8, inset 1px 1px 0 #fff;
      color: #f00;
      line-height: 15px;
      white-space: pre;
    }
    .windows { display: flex; gap: 2px; margin: 0 4px; }
    .windows button { line-height: 0; }
    .periods {
      display: flex;
      justify-content: space-between;
      height: 20px;
      border-bottom: 2px solid #b00000;
      color: #c0c0c0;
    }
    .list { display: flex; gap: 9px; margin-left: -6px; }
    .seconds { margin-left: 4px; }
    .current { color: #54fcfc; }
    .actions { display: flex; }
    .actions button {
      box-sizing: border-box;
      width: 35px;
      border-left: 1px solid #b00000;
    }
    .board {
      display: grid;
      grid-template-columns: 523fr 533fr 534fr;
      grid-template-rows: 392fr 362fr;
      min-height: 0;
    }
    .side { border-left: 1px solid #b00000; }
    .low { border-top: 1px solid #b00000; }
    .slim { --axis-width: 50px; }
  `;

  render() {
    const menus = ["系统", "功能", "报价", "分析", "扩展市场行情", "在线服务", "资讯", "工具", "帮助"];
    const tools = ["智能账单", "在线客服", "行　情", "资　讯", "交　易", "网　站"];
    const periods = ["分时", "1分钟", "5分钟", "15分钟", "30分钟", "60分钟", "日线", "周线", "月线", "10分钟", "45日线", "季线", "年线", "5秒", "15秒", "多周期", "更多 >"];
    const actions = ["指标", "复权", "窗口", "放大", "F10", "标记", "+自选", "返回"];
    return html`
      <header class="menubar">
        <svg class="logo" viewBox="0 0 8 18" aria-hidden="true">
          <circle cx="-2" cy="9" r="7.5" fill="#d8ecfa" stroke="#3a86cc" stroke-width="2"></circle>
          <path d="M-8 10C-4 7.500 2 7.500 6 10M0 13Q3 12.500 4 10.500" fill="none" stroke="#3a86cc" stroke-width="2"></path>
        </svg>
        ${menus.map((m) => html`<button class=${classMap({ menu: true, wide: m.length > 2 })}>${m}</button>`)}
        <button class="tab">期权</button>
        <span class="status">证券交易未登录&nbsp; 运输指数</span>
        <div class="tools">${tools.map((t) => html`<button class="tool">${t}</button>`)}</div>
        <div class="windows">
          ${[
            ["最小化", svg`<path d="M5 13H15" stroke-width="2"></path>`],
            ["还原", svg`<path d="M8.500 9V6.500H14.500V11.500H12M5.500 9.500H11.500V14H5.500z" stroke-width="1.500"></path>`],
            ["关闭", svg`<path d="M6 6 14 14M14 6 6 14" stroke-width="2.500"></path>`],
          ].map(
            ([label, icon]) => html`<button aria-label=${label as string}>
              <svg width="20" height="20" viewBox="0 0 20 20" fill="none" stroke="#606060">
                <circle cx="10" cy="10" r="9.300" fill="#ececec" stroke="#808080"></circle>
                ${icon}
              </svg>
            </button>`,
          )}
        </div>
      </header>
      <nav class="periods">
        <div class="list">
          ${periods.map((p) => html`<button class=${classMap({ current: p === "分时", seconds: p.endsWith("秒") })}>${p}</button>`)}
        </div>
        <div class="actions">${actions.map((a) => html`<button>${a}</button>`)}</div>
      </nav>
      <main class="board">
        <intraday-pane></intraday-pane>
        <kline-pane class="side" .data=${MIN5}></kline-pane>
        <kline-pane class="side slim" .data=${MIN15}></kline-pane>
        <kline-pane class="low" .data=${DAILY}></kline-pane>
        <kline-pane class="low side" .data=${WEEKLY}></kline-pane>
        <kline-pane class="low side slim" .data=${MONTHLY}></kline-pane>
      </main>
    `;
  }
}
